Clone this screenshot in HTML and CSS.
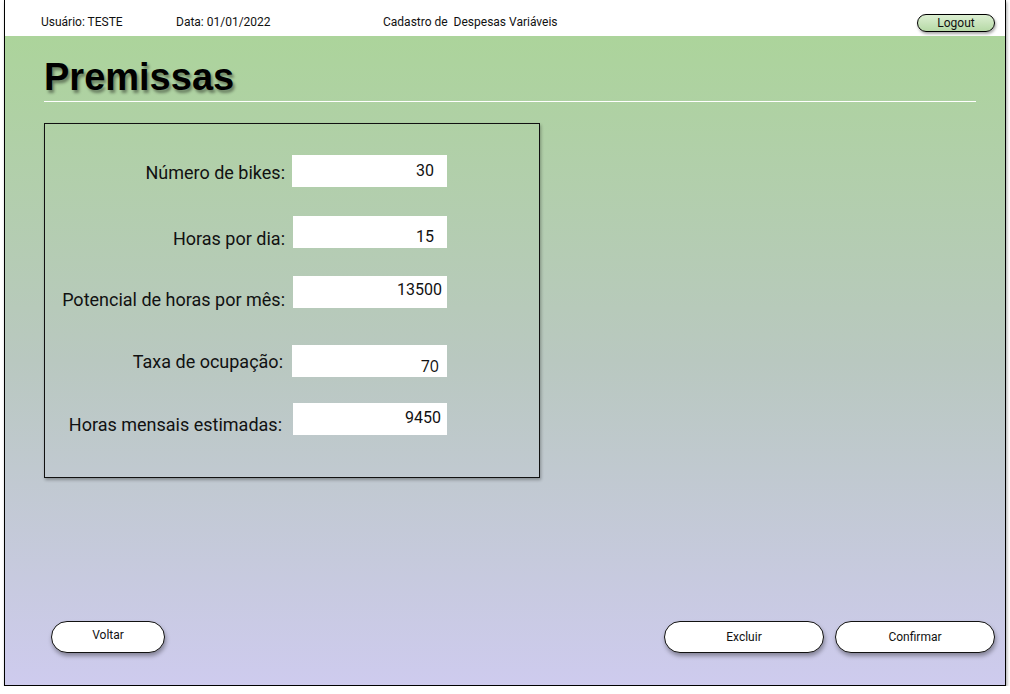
FILE: index.html
```html
<!DOCTYPE html>
<html lang="pt">
<head>
<meta charset="utf-8">
<title>Premissas</title>
<link rel="stylesheet" href="styles.css">
</head>
<body>
<div class="frame">
  <header class="topbar">
    <span class="user">Usuário: TESTE</span>
    <span class="date">Data: 01/01/2022</span>
    <span class="screen">Cadastro de&nbsp; Despesas Variáveis</span>
    <button class="logout">Logout</button>
  </header>
  <main class="main">
    <h1 class="title">Premissas</h1>
    <div class="rule"></div>
    <section class="panel">
      <div class="row r1">
        <label class="label">Número de bikes:</label>
        <div class="field">30</div>
      </div>
      <div class="row r2">
        <label class="label">Horas por dia:</label>
        <div class="field">15</div>
      </div>
      <div class="row r3">
        <label class="label">Potencial de horas por mês:</label>
        <div class="field">13500</div>
      </div>
      <div class="row r4">
        <label class="label">Taxa de ocupação:</label>
        <div class="field">70</div>
      </div>
      <div class="row r5">
        <label class="label">Horas mensais estimadas:</label>
        <div class="field">9450</div>
      </div>
    </section>
    <footer class="actions">
      <button class="btn btn-back">Voltar</button>
      <div class="right-actions">
        <button class="btn btn-wide">Excluir</button>
        <button class="btn btn-wide">Confirmar</button>
      </div>
    </footer>
  </main>
</div>
</body>
</html>
```

FILE: styles.css
```css
html, body {
  margin: 0;
  padding: 0;
  background: #ffffff;
}

body {
  font-family: Roboto, "Liberation Sans", sans-serif;
  color: #111;
}

.frame {
  margin-left: 4px;
  width: 1002px;
  height: 686px;
  box-sizing: border-box;
  border: 1px solid #000;
  border-top: none;
  display: flex;
  flex-direction: column;
  box-shadow: 1px 2px 3px rgba(0, 0, 0, 0.35);
}

.topbar {
  height: 36px;
  flex: none;
  background: #fff;
  display: flex;
  align-items: center;
  padding-top: 7px;
  box-sizing: border-box;
  font-size: 12px;
  color: #111;
}

.user {
  margin-left: 36px;
  width: 135px;
}

.date {
  width: 207px;
}

.screen {
  flex: 1;
}

.logout {
  margin-right: 10px;
  margin-top: 3px;
  width: 78px;
  height: 18px;
  padding: 0;
  border: 1.5px solid #000;
  border-radius: 9px;
  background: linear-gradient(#dcefd2, #b6d9a6);
  font-family: Roboto, "Liberation Sans", sans-serif;
  font-size: 12px;
  color: #111;
  line-height: 14px;
  box-shadow: 1px 2px 3px rgba(0, 0, 0, 0.35);
}

.main {
  flex: 1;
  background: linear-gradient(#acd49b 0%, #b9c8c0 50%, #cecbee 100%);
  display: flex;
  flex-direction: column;
}

.title {
  margin: 19px 0 0 39px;
  font-family: "Liberation Sans", Arial, sans-serif;
  font-weight: bold;
  font-size: 38px;
  line-height: 44px;
  color: #000;
  text-shadow: 2px 3px 3px rgba(0, 0, 0, 0.4);
}

.rule {
  margin: 2px 29px 0 39px;
  height: 1px;
  background: #fff;
}

.panel {
  margin: 21px 0 0 39px;
  width: 496px;
  height: 355px;
  box-sizing: border-box;
  border: 1px solid #111;
  box-shadow: 1px 2px 3px rgba(0, 0, 0, 0.3);
  padding-top: 31px;
  display: flex;
  flex-direction: column;
}

.row {
  display: grid;
  grid-template-columns: 240px 155px;
  column-gap: 7px;
  align-items: center;
  height: 32px;
}

.label {
  text-align: right;
  font-size: 18px;
  color: #111;
  white-space: nowrap;
}

.field {
  background: #fff;
  height: 32px;
  box-sizing: border-box;
  text-align: right;
  font-size: 16px;
  color: #111;
  padding-right: 13px;
  line-height: 32px;
}

.r1 .label { padding-top: 2px; }
.r2 { margin-top: 27px; }
.r2 .label { padding-top: 14px; }
.r2 .field { margin-left: 1px; padding-top: 5px; }
.r3 { margin-top: 27px; }
.r3 .label { padding-top: 16px; }
.r3 .field { margin-left: 1px; padding-right: 5px; line-height: 28px; }
.r4 { margin-top: 40px; }
.r4 .label { margin-right: 2px; }
.r4 .field { padding-right: 8px; line-height: 42px; font-family: "Open Sans", sans-serif; }
.r5 { margin-top: 26px; }
.r5 .label { margin-right: 3px; padding-top: 10px; }
.r5 .field { margin-left: 1px; padding-right: 6px; line-height: 30px; }

.actions {
  margin-top: auto;
  margin-bottom: 32px;
  display: flex;
  justify-content: space-between;
  padding: 0 10px 0 46px;
}

.right-actions {
  display: flex;
  gap: 11px;
}

.btn {
  height: 32px;
  padding: 0;
  background: #fff;
  border: 1px solid #111;
  border-radius: 16px;
  font-family: Roboto, "Liberation Sans", sans-serif;
  font-size: 12px;
  color: #111;
  box-shadow: 1px 3px 4px rgba(0, 0, 0, 0.35);
}

.btn-back {
  width: 114px;
  padding-bottom: 5px;
}

.btn-wide {
  width: 160px;
}
```
